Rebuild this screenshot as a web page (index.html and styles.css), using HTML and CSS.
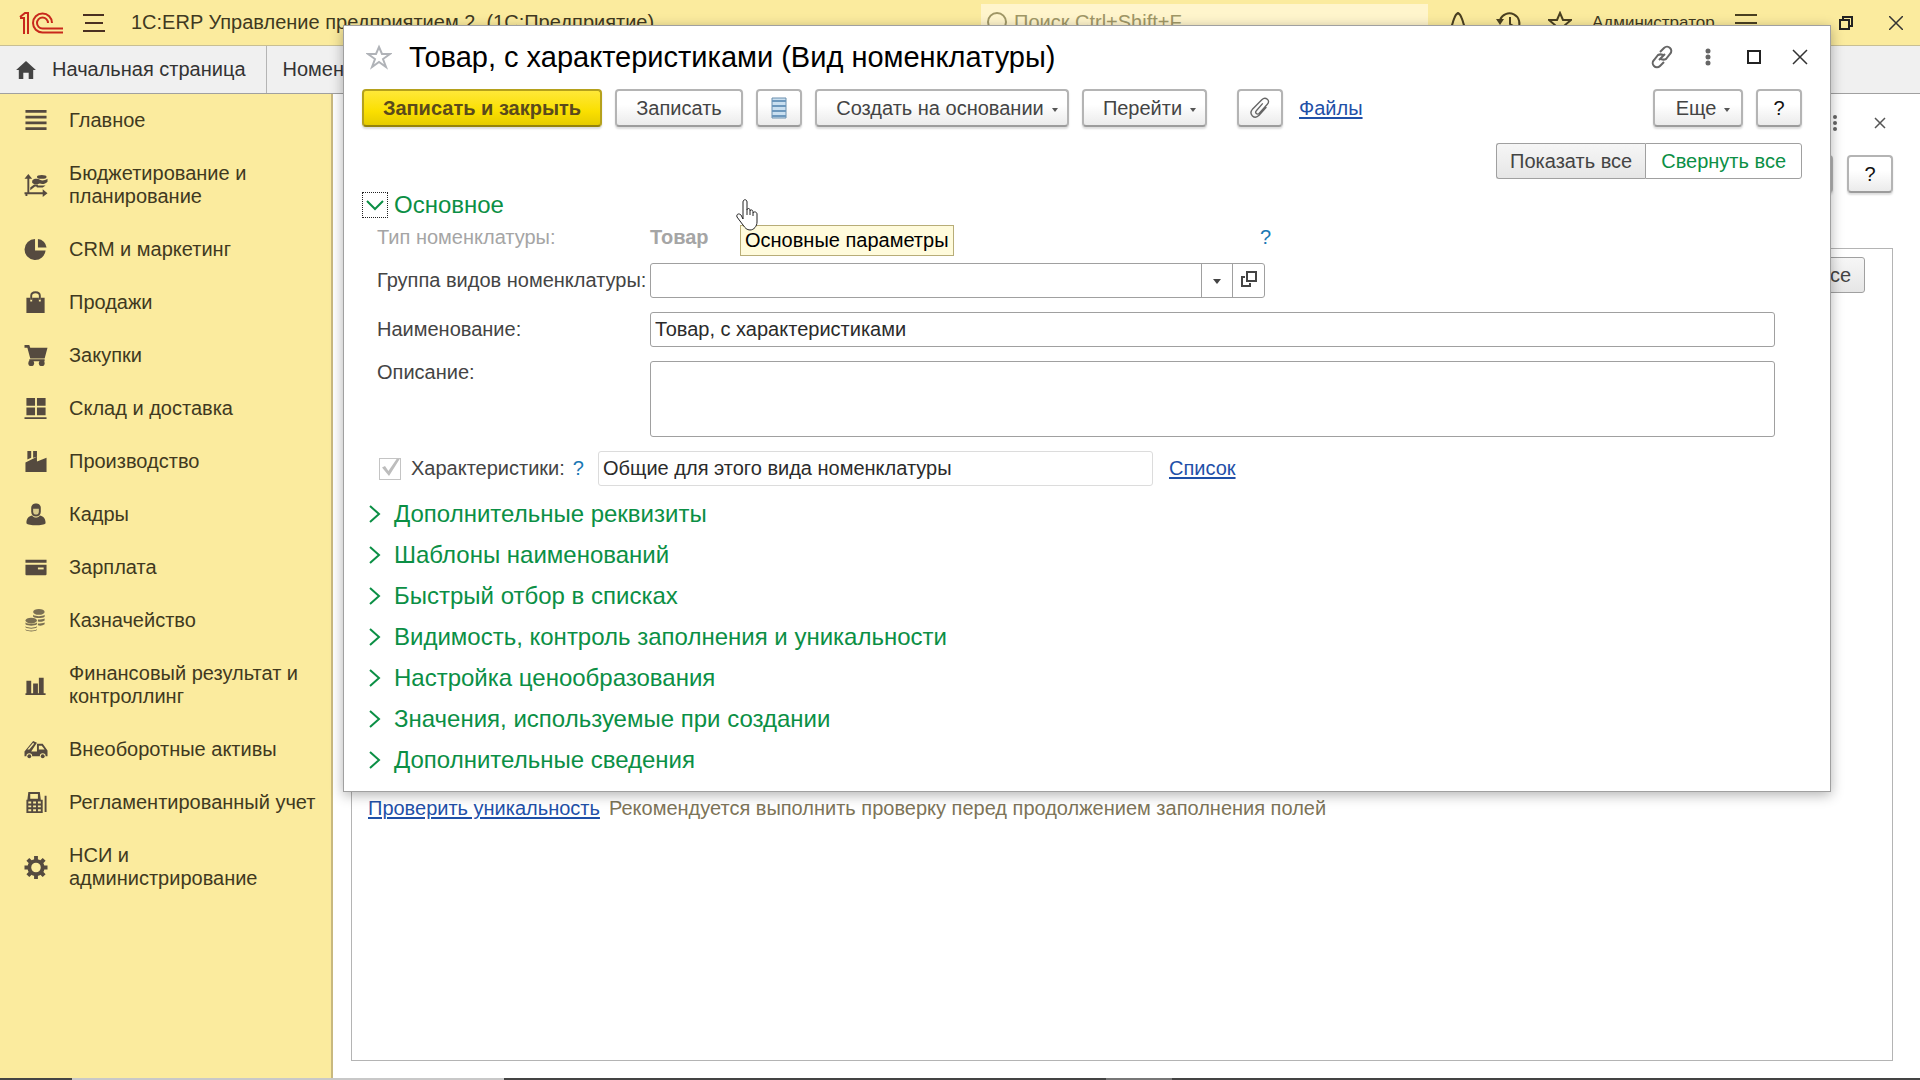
FILE: index.html
```
<!DOCTYPE html>
<html lang="ru">
<head>
    <meta charset="UTF-8">
    <meta name="viewport" content="width=device-width, initial-scale=1.0">
    <title>1С:ERP Управление предприятием 2</title>
    <link rel="stylesheet" href="styles.css">
</head>
<body>
    <header class="topbar">
        <svg class="logo" viewBox="0 0 44 22" fill="none" stroke="#c8281c" stroke-width="2">
            <path d="M1 5l5-4h3v21M1 6h4v16"/>
            <path d="M33 11a9.500 9.500 0 1 0-9.500 9.500H44M29 11a5.500 5.500 0 1 0-5.500 5.500H44"/>
        </svg>
        <button class="icon-button menu-button" aria-label="Меню">
            <svg width="22" height="18" viewBox="0 0 22 18" stroke="#4a3021" stroke-width="2"><path d="M0 1h21M2 9h18M0 17h22"/></svg>
        </button>
        <span class="app-title">1С:ERP Управление предприятием 2&nbsp; (1С:Предприятие)</span>
        <div class="search">
            <svg width="22" height="22" viewBox="0 0 22 22" fill="none" stroke="#a09766" stroke-width="2"><circle cx="11" cy="10" r="9"/><path d="M4 16l-3 5"/></svg>
            <input type="text" placeholder="Поиск Ctrl+Shift+F" aria-label="Поиск">
        </div>
        <div class="top-tools">
            <button class="icon-button" aria-label="Уведомления"><svg width="24" height="24" viewBox="0 0 24 24" fill="none" stroke="#4a4021" stroke-width="2"><path d="M3 19c4-3 3-7 5-11 1-3 2-5 4-6 2 1 3 3 4 6 2 4 1 8 5 11zM10 22h4"/></svg></button>
            <button class="icon-button" aria-label="История"><svg width="26" height="24" viewBox="0 0 26 24" fill="none" stroke="#4a4021" stroke-width="2"><path d="M4 9a10 10 0 1 1 3 11M14 6v7l5 3"/><path d="M0 8h8l-4 6z" fill="#4a4021" stroke="none"/></svg></button>
            <button class="icon-button" aria-label="Избранное"><svg width="24" height="24" viewBox="0 0 24 24" fill="none" stroke="#4a4021" stroke-width="2"><path d="M12 2l3 7h8l-6 5 2 8-7-5-7 5 2-8-6-5h8z"/></svg></button>
            <a class="user" href="#">Администратор</a>
            <button class="icon-button" aria-label="Настройки"><svg width="22" height="22" viewBox="0 0 22 22" stroke="#4a4021" stroke-width="2"><path d="M0 3h22M0 11h22M0 19h22"/></svg></button>
        </div>
        <div class="window-tools">
            <button class="icon-button" aria-label="Свернуть в окно"><svg width="14" height="14" viewBox="0 0 14 14" fill="none" stroke="#222" stroke-width="2"><path d="M4 4V1h9v9h-3M1 4h9v9H1z"/></svg></button>
            <button class="icon-button" aria-label="Закрыть"><svg width="14" height="14" viewBox="0 0 14 14" stroke="#333" stroke-width="1.500"><path d="M0 0l14 14M14 0L0 14"/></svg></button>
        </div>
    </header>

    <nav class="tabs">
        <a class="tab" href="#">
            <svg width="20" height="18" viewBox="0 0 22 20" fill="#444"><path d="M11 0l11 10h-3v10h-5v-7H8v7H3V10H0z"/></svg>
            Начальная страница
        </a>
        <a class="tab" href="#">Номенклатура</a>
    </nav>

    <div class="workspace">
        <nav class="sidebar">
            <a href="#"><svg viewBox="0 0 24 24"><path d="M1 1h22v3H1zM1 7h22v3H1zM1 13h22v3H1zM1 19h22v3H1z"/></svg>Главное</a>
            <a href="#"><svg viewBox="0 0 24 24"><path d="M3 4h2v15h14v-3l5 4-5 4v-3H3v2H1v-2H0v-2h3zM0 5l4-5 4 5zM6 17v-3l4-3h4v2h-3z"/><ellipse cx="18" cy="3" rx="5" ry="2"/><path d="M8 7c2-3 6-2 8-1 2 1 5 1 8-1v3c-2 2-5 3-8 2-3 1-6 1-8-1zM12 12h10l-3 2h-6z"/></svg>Бюджетирование и планирование</a>
            <a href="#"><svg viewBox="0 0 24 24"><path d="M11 1v12h11A11 11 0 1 1 11 1z"/><path d="M14 1a10 10 0 0 1 9 9h-9z"/></svg>CRM и маркетинг</a>
            <a href="#"><svg viewBox="0 0 24 24"><path d="M2 7h4v4h2V7h7v4h2V7h4v16H2z"/><path d="M7 9V5c0-5 9-5 9 0v4" fill="none" stroke="#554a3f" stroke-width="2"/></svg>Продажи</a>
            <a href="#"><svg viewBox="0 0 24 24"><path d="M0 1h5l1 3h18l-3 11H6L3 4H0zM5 16h16v2H5z"/><circle cx="7" cy="20" r="3"/><circle cx="18" cy="20" r="3"/></svg>Закупки</a>
            <a href="#"><svg viewBox="0 0 24 24"><path d="M2 1h9v8H2zM13 1h9v8h-9zM2 11h9v8H2zM13 11h9v8h-9zM0 21h23v2H0z"/></svg>Склад и доставка</a>
            <a href="#"><svg viewBox="0 0 24 24"><path d="M3 1h4v7l-4 2zM9 1h4v6l-4 1zM1 13l12-6v5l10-4v15H1z"/></svg>Производство</a>
            <a href="#"><svg viewBox="0 0 24 24"><path d="M7 5c0-6 10-6 10 0v4c0 3-2 5-5 5s-5-2-5-5z"/><path d="M9 6h6v3c0 4-6 4-6 0z" fill="#d8ca8b"/><path d="M2 21c0-6 3-7 6-8 2 3 6 3 8 0 3 1 6 2 6 8-2 3-18 3-20 0z"/></svg>Кадры</a>
            <a href="#"><svg viewBox="0 0 24 24"><path d="M1 4h22v3H1zM1 9h22v10c0 1-1 1-1 1H2c-1 0-1-1-1-1z"/><path d="M14 12h6v2h-6z" fill="#fbeb9e"/></svg>Зарплата</a>
            <a href="#"><svg viewBox="0 0 24 24"><g fill="#7a6f52"><ellipse cx="15" cy="3" rx="6" ry="3"/><path d="M9 6c3 2 9 2 12 0v2c-3 2-9 2-12 0zM14 11c3 0 5 0 7-1v2c-2 1-4 2-7 1zM14 15c3 0 5 0 7-1v2c-2 1-4 2-7 1z"/><ellipse cx="7" cy="12" rx="6" ry="3"/><path d="M1 14c3 2 9 2 12 0v2c-3 2-9 2-12 0zM1 18c3 2 9 2 12 0v1c-3 2-9 2-12 0zM1 21c3 2 9 2 12 0v1c-3 2-9 2-12 0z"/></g></svg>Казначейство</a>
            <a href="#"><svg viewBox="0 0 24 24"><path d="M2 7h5v13h2V10h5v10h1V4h5v16h2v2H1v-2h1z"/></svg>Финансовый результат и контроллинг</a>
            <a href="#"><svg viewBox="0 0 24 24"><path d="M0 14L9 3l4 2-6 9h6V6h6l5 7v6h-2a3 3 0 0 0-6 0H8a3 3 0 0 0-6 0H0z"/><path d="M15 8h3l3 4h-6zM3 12l6-7 1 1-5 6z" fill="#fbeb9e"/><circle cx="5" cy="19" r="2"/><circle cx="19" cy="19" r="2"/></svg>Внеоборотные активы</a>
            <a href="#"><svg viewBox="0 0 24 24"><path d="M4 1h12l1 8h2v14H2V9h1zM21 5h2v17h-2z"/><path d="M6 3h8v5H6zM4 11h3v2H4zM9 11h3v2H9zM14 11h3v2h-3zM4 15h3v2H4zM9 15h3v2H9zM14 15h3v2h-3zM4 19h3v2H4zM9 19h3v2H9zM14 19h3v2h-3z" fill="#fbeb9e"/></svg>Регламентированный учет</a>
            <a href="#"><svg viewBox="0 0 24 24"><circle cx="12" cy="12" r="7" fill="none" stroke="#554a3f" stroke-width="4"/><path d="M10 0h4v5h-4zM10 19h4v5h-4zM0 10h5v4H0zM19 10h5v4h-5zM2 5l3-3 3 3-3 3zM16 5l3-3 3 3-3 3zM2 19l3-3 3 3-3 3zM16 19l3-3 3 3-3 3z"/></svg>НСИ и администрирование</a>
        </nav>

        <main class="page">
            <div class="page-tools">
                <button class="icon-button" aria-label="Действия"><svg width="6" height="18" viewBox="0 0 6 18" fill="#666"><circle cx="3" cy="3" r="2"/><circle cx="3" cy="9" r="2"/><circle cx="3" cy="15" r="2"/></svg></button>
                <button class="icon-button" aria-label="Закрыть"><svg width="12" height="12" viewBox="0 0 12 12" stroke="#555" stroke-width="1.500"><path d="M1 1l10 10M11 1L1 11"/></svg></button>
            </div>
            <div class="page-commands">
                <button class="btn btn-more" aria-label="Еще"></button>
                <button class="btn btn-square">?</button>
            </div>
            <section class="page-body">
                <button class="switch-option">Свернуть все</button>
                <p class="note"><a href="#">Проверить уникальность</a><span>Рекомендуется выполнить проверку перед продолжением заполнения полей</span></p>
            </section>
        </main>
    </div>
    <footer class="taskbar"><span class="task-start"></span><span class="task-search"></span><span class="task-apps"></span><span class="task-active"></span></footer>

    <div class="dialog" role="dialog" aria-labelledby="dialogTitle">
        <div class="dialog-head">
            <svg width="26" height="26" viewBox="0 0 26 26" fill="none" stroke="#b0b3b8" stroke-width="2"><path d="M13 3l3 7h8l-7 5 3 8-7-5-7 5 3-8-7-5h8z"/></svg>
            <h1 id="dialogTitle">Товар, с характеристиками (Вид номенклатуры)</h1>
            <button class="icon-button" aria-label="Ссылка"><svg width="24" height="24" viewBox="0 0 24 24" fill="none" stroke="#666" stroke-width="2"><path d="M10 7l4-4c4-4 10 2 6 6l-4 5c-2 1-3 1-5 0M14 17l-4 4c-4 4-10-2-6-6l4-5c2-1 3-1 5 0M9 15l6-6"/></svg></button>
            <button class="icon-button" aria-label="Действия"><svg width="6" height="18" viewBox="0 0 6 18" fill="#666"><circle cx="3" cy="3" r="2.500"/><circle cx="3" cy="9" r="2.500"/><circle cx="3" cy="15" r="2.500"/></svg></button>
            <button class="icon-button" aria-label="Развернуть"><svg width="14" height="14" viewBox="0 0 14 14" fill="none" stroke="#222" stroke-width="2"><path d="M1 1h12v12H1z"/></svg></button>
            <button class="icon-button" aria-label="Закрыть"><svg width="16" height="16" viewBox="0 0 16 16" stroke="#333" stroke-width="1.500"><path d="M1 1l14 14M15 1L1 15"/></svg></button>
        </div>

        <div class="commands">
            <button class="btn btn-primary">Записать и закрыть</button>
            <button class="btn btn-save">Записать</button>
            <button class="btn btn-square" aria-label="Список"><svg width="16" height="22" viewBox="0 0 16 22"><path d="M1 1h14v20H1z" fill="#c9dff0" stroke="#6a8fae"/><path d="M1 4h14M1 9h14M1 14h14M1 19h14" stroke="#6d98bd" stroke-width="2"/></svg></button>
            <button class="btn btn-create">Создать на основании <i class="caret"></i></button>
            <button class="btn btn-go">Перейти <i class="caret"></i></button>
            <button class="btn btn-square btn-files" aria-label="Присоединить файл"><svg width="22" height="22" viewBox="0 0 24 24" fill="none" stroke="#666" stroke-width="1.500"><path d="M15 7l-7 8c-2 2 1 5 3 3l9-10c4-4-2-9-6-5L4 13c-5 6 2 12 7 7l8-9"/></svg></button>
            <a class="files-link" href="#">Файлы</a>
            <button class="btn btn-more">Еще <i class="caret"></i></button>
            <button class="btn btn-square">?</button>
        </div>

        <div class="switch">
            <button class="switch-option">Показать все</button><button class="switch-option switch-active">Свернуть все</button>
        </div>

        <button class="section section-open">
            <span class="focus-box"><svg width="20" height="20" viewBox="0 0 20 20"><path d="M2 6l8 8 8-8"/></svg></span>Основное
        </button>

        <form class="fields">
            <div class="row row-type">
                <span class="label">Тип номенклатуры:</span>
                <b>Товар</b>
                <a class="hint" href="#">?</a>
            </div>
            <div class="row">
                <label class="label" for="group">Группа видов номенклатуры:</label>
                <div class="combo">
                    <select id="group"><option></option></select>
                    <button type="button" aria-label="Открыть"><svg width="16" height="16" viewBox="0 0 16 16" fill="none" stroke="#444" stroke-width="2"><path d="M6 1h9v9H6zM4 6H1v9h8v-3"/></svg></button>
                </div>
            </div>
            <div class="row">
                <label class="label" for="name">Наименование:</label>
                <input class="text" type="text" id="name" value="Товар, с характеристиками">
            </div>
            <div class="row row-top">
                <label class="label" for="description">Описание:</label>
                <textarea class="text" id="description"></textarea>
            </div>
            <div class="row row-features">
                <input type="checkbox" id="features" checked disabled>
                <label for="features">Характеристики:</label>
                <a class="hint" href="#">?</a>
                <input class="text text-light" type="text" value="Общие для этого вида номенклатуры" aria-label="Вид характеристик" readonly>
                <a href="#">Список</a>
            </div>
        </form>

        <div class="sections">
            <button class="section"><svg width="14" height="20" viewBox="0 0 14 20"><path d="M2 2l9 8-9 8"/></svg>Дополнительные реквизиты</button>
            <button class="section"><svg width="14" height="20" viewBox="0 0 14 20"><path d="M2 2l9 8-9 8"/></svg>Шаблоны наименований</button>
            <button class="section"><svg width="14" height="20" viewBox="0 0 14 20"><path d="M2 2l9 8-9 8"/></svg>Быстрый отбор в списках</button>
            <button class="section"><svg width="14" height="20" viewBox="0 0 14 20"><path d="M2 2l9 8-9 8"/></svg>Видимость, контроль заполнения и уникальности</button>
            <button class="section"><svg width="14" height="20" viewBox="0 0 14 20"><path d="M2 2l9 8-9 8"/></svg>Настройка ценообразования</button>
            <button class="section"><svg width="14" height="20" viewBox="0 0 14 20"><path d="M2 2l9 8-9 8"/></svg>Значения, используемые при создании</button>
            <button class="section"><svg width="14" height="20" viewBox="0 0 14 20"><path d="M2 2l9 8-9 8"/></svg>Дополнительные сведения</button>
        </div>

        <div class="tooltip" role="tooltip">Основные параметры</div>
        <svg class="pointer" width="22" height="32" viewBox="0 0 22 32" fill="#fff" stroke="#222"><path d="M7 20V3c0-3 4-3 4 0v8c0-2 3-2 3 0v1c1-2 3-1 3 1v1c1-2 4-1 4 1v8c0 4-3 8-7 8-3 0-5-2-7-5l-6-8c-1-3 2-4 4-2z"/><path d="M11 11v5M14 12v4M17 14v3"/></svg>
    </div>
</body>
</html>
```
FILE: styles.css
```
* {
  box-sizing: border-box;
}

body {
  margin: 0;
  min-height: 100vh;
  display: flex;
  flex-direction: column;
  position: relative;
  background: #fff;
  color: #444;
  font-family: "Liberation Sans", Arial, sans-serif;
  font-size: 20px;
}

button,
input,
select,
textarea {
  font: inherit;
  color: inherit;
}

a {
  color: #1f50a8;
  text-underline-offset: 2px;
}

svg {
  flex: none;
}

.icon-button {
  display: flex;
  justify-content: center;
  padding: 0;
  border: 0;
  background: none;
}

/* Top bar */
.topbar {
  display: flex;
  align-items: center;
  height: 46px;
  padding: 0 17px 0 19px;
  background: #fbeb9e;
  border-bottom: 1px solid #c8bf94;
  color: #40391f;
}

.logo {
  width: 44px;
  height: 22px;
}

.menu-button {
  margin: 0 26px 0 20px;
}

.app-title {
  width: 850px;
}

.search {
  display: flex;
  flex: 1;
  align-items: center;
  gap: 6px;
  height: 38px;
  padding-left: 5px;
  background: #fff5cc;
}

.search input {
  flex: 1;
  min-width: 0;
  padding: 0;
  border: 0;
  background: none;
}

.search input::placeholder {
  color: #a09766;
}

.top-tools {
  display: flex;
  align-items: center;
  gap: 26px;
  width: 411px;
  padding-left: 18px;
}

.user {
  margin-left: -6px;
  margin-right: -6px;
  color: #40391f;
  font-size: 17px;
  text-decoration: none;
}

.window-tools {
  display: flex;
  gap: 36px;
}

/* Tabs */
.tabs {
  display: flex;
  height: 48px;
  background: #f0f0f0;
  border-bottom: 1px solid #a0a0a0;
}

.tab {
  display: flex;
  align-items: center;
  gap: 16px;
  padding: 0 20px 0 16px;
  border-right: 1px solid #b4b4b4;
  color: #333;
  text-decoration: none;
}

/* Sections panel */
.workspace {
  display: flex;
  flex: 1;
}

.sidebar {
  width: 333px;
  background: #fbeb9e;
  border-right: 2px solid #c9b97f;
}

.sidebar a {
  display: flex;
  align-items: center;
  gap: 21px;
  padding: 15px 12px 15px 24px;
  color: #40391f;
  line-height: 23px;
  text-decoration: none;
}

.sidebar svg {
  width: 24px;
  height: 23px;
  fill: #554a3f;
}

/* Page under the dialog */
.page {
  display: flex;
  flex: 1;
  flex-direction: column;
  padding: 15px 27px 17px 18px;
}

.page-tools {
  display: flex;
  align-items: center;
  justify-content: flex-end;
  gap: 36px;
  height: 28px;
  padding-right: 7px;
}

.page-commands {
  display: flex;
  justify-content: flex-end;
  gap: 14px;
  margin-top: 18px;
}

.page-body {
  display: flex;
  flex: 1;
  flex-direction: column;
  align-items: flex-end;
  margin-top: 55px;
  padding: 8px 27px 0 16px;
  border: 1px solid #b4b4b4;
}

.note {
  display: flex;
  gap: 9px;
  align-self: flex-start;
  margin: 504px 0 0;
  color: #7d7458;
}

/* Buttons */
.btn {
  display: flex;
  align-items: center;
  justify-content: center;
  gap: 8px;
  height: 38px;
  padding: 0 10px 0 20px;
  border: 2px solid #b4b4b4;
  border-bottom-color: #9c9c9c;
  border-radius: 4px;
  background: linear-gradient(#fff 40%, #ebebeb);
  box-shadow: 0 2px 2px #ddd;
  white-space: nowrap;
}

.btn-primary {
  width: 240px;
  padding: 0;
  border-color: #b5a11c;
  border-bottom-color: #94830c;
  background: linear-gradient(#ffe838, #fadf00 60%, #e6cc00);
  color: #5a4a1c;
  font-weight: bold;
}

.btn-save {
  width: 128px;
  padding: 0;
}

.btn-create {
  width: 254px;
}

.btn-go {
  width: 125px;
}

.btn-more {
  width: 90px;
}

.btn-square {
  width: 46px;
  padding: 0;
  color: #111;
}

.caret {
  margin-top: 4px;
  border: 3px solid transparent;
  border-top: 4px solid #555;
  border-bottom: 0;
}

.switch-option {
  height: 36px;
  padding: 0 13px;
  border: 1px solid #a0a0a0;
  border-radius: 3px;
  background: linear-gradient(#f6f6f6, #e6e6e6);
}

/* Dialog */
.dialog {
  position: absolute;
  top: 25px;
  left: 343px;
  right: 89px;
  padding: 12px 28px 11px 18px;
  border: 1px solid #a0a0a0;
  background: #fff;
  box-shadow: 0 3px 12px rgba(0, 0, 0, 0.3);
}

.dialog-head {
  display: flex;
  align-items: center;
  height: 38px;
  margin-right: -21px;
  padding-left: 4px;
}

.dialog-head h1 {
  flex: 1;
  margin: 0 0 0 17px;
  color: #000;
  font-size: 29px;
  font-weight: normal;
}

.dialog-head .icon-button {
  width: 46px;
}

.commands {
  display: flex;
  align-items: center;
  gap: 13px;
  margin-top: 13px;
}

.btn-files {
  margin-left: 17px;
}

.files-link {
  flex: 1;
  margin-left: 3px;
}

.switch {
  display: flex;
  justify-content: flex-end;
  margin-top: 16px;
}

.switch .switch-option:first-child {
  border-right: 0;
  border-radius: 3px 0 0 3px;
}

.switch .switch-active {
  padding: 0 15px;
  border-radius: 0 3px 3px 0;
  background: #fff;
  color: #0b8f45;
}

.section {
  display: flex;
  align-items: center;
  gap: 12px;
  height: 41px;
  padding: 0 0 0 6px;
  border: 0;
  background: none;
  color: #0b8f45;
  font-size: 24px;
}

.section svg {
  fill: none;
  stroke: #0b8f45;
  stroke-width: 2;
}

.section-open {
  gap: 6px;
  height: 26px;
  margin-top: 13px;
  padding: 0;
}

.focus-box {
  display: flex;
  padding: 2px;
  border: 1px dotted #222;
}

/* Form */
.fields {
  display: flex;
  flex-direction: column;
  gap: 14px;
  padding: 7px 27px 0 15px;
}

.row {
  display: flex;
  align-items: center;
}

.row-top {
  align-items: flex-start;
}

.label {
  width: 273px;
}

.row-type {
  height: 24px;
  color: #a5a5a5;
}

.row-type b {
  width: 610px;
}

.hint {
  color: #1a78b4;
  text-decoration: none;
}

.text {
  flex: 1;
  height: 35px;
  padding: 0 4px;
  border: 1px solid #a0a0a0;
  border-radius: 3px;
  color: #2b2b2b;
}

textarea.text {
  height: 76px;
  resize: none;
}

.combo {
  display: flex;
  width: 615px;
  height: 35px;
  border: 1px solid #a0a0a0;
  border-radius: 3px;
}

.combo select {
  flex: 1;
  appearance: none;
  border: 0;
  background: url("data:image/svg+xml,%3Csvg xmlns='http://www.w3.org/2000/svg' width='31' height='33'%3E%3Cpath d='M0 0h1v33H0z' fill='%23a0a0a0'/%3E%3Cpath d='M12 15h8l-4 5z' fill='%23444'/%3E%3C/svg%3E") no-repeat right center;
}

.combo button {
  width: 32px;
  padding: 0;
  border: 0;
  border-left: 1px solid #a0a0a0;
  background: none;
}

.row-features {
  padding-left: 2px;
}

.row-features input[type="checkbox"] {
  appearance: none;
  width: 22px;
  height: 22px;
  margin: 0 10px 0 0;
  border: 1px solid #c4c4c4;
  background: #fff;
}

.row-features input[type="checkbox"]::after {
  content: "";
  display: block;
  height: 20px;
  background: #bdbdbd;
  clip-path: polygon(10% 45%, 25% 38%, 42% 62%, 85% 0, 100% 0, 45% 88%);
}

.row-features .hint {
  margin: 0 14px 0 8px;
}

.row-features .text-light {
  flex: 0 1 555px;
  margin-right: 16px;
  border-color: #dcdcdc;
}

.sections {
  margin-top: 7px;
}

/* Tooltip and mouse pointer */
.tooltip {
  position: absolute;
  top: 199px;
  left: 396px;
  padding: 3px 4px;
  border: 1px solid #b8ad78;
  background: #fffbdc;
  color: #000;
  line-height: 23px;
}

.pointer {
  position: absolute;
  top: 173px;
  left: 392px;
}

/* Taskbar edge */
.taskbar {
  display: flex;
  height: 2px;
  background: #444;
}

.task-start {
  width: 72px;
}

.task-search {
  width: 432px;
  background: #c8c8c8;
}

.task-apps {
  width: 602px;
}

.task-active {
  width: 66px;
  background: #777;
}
```
